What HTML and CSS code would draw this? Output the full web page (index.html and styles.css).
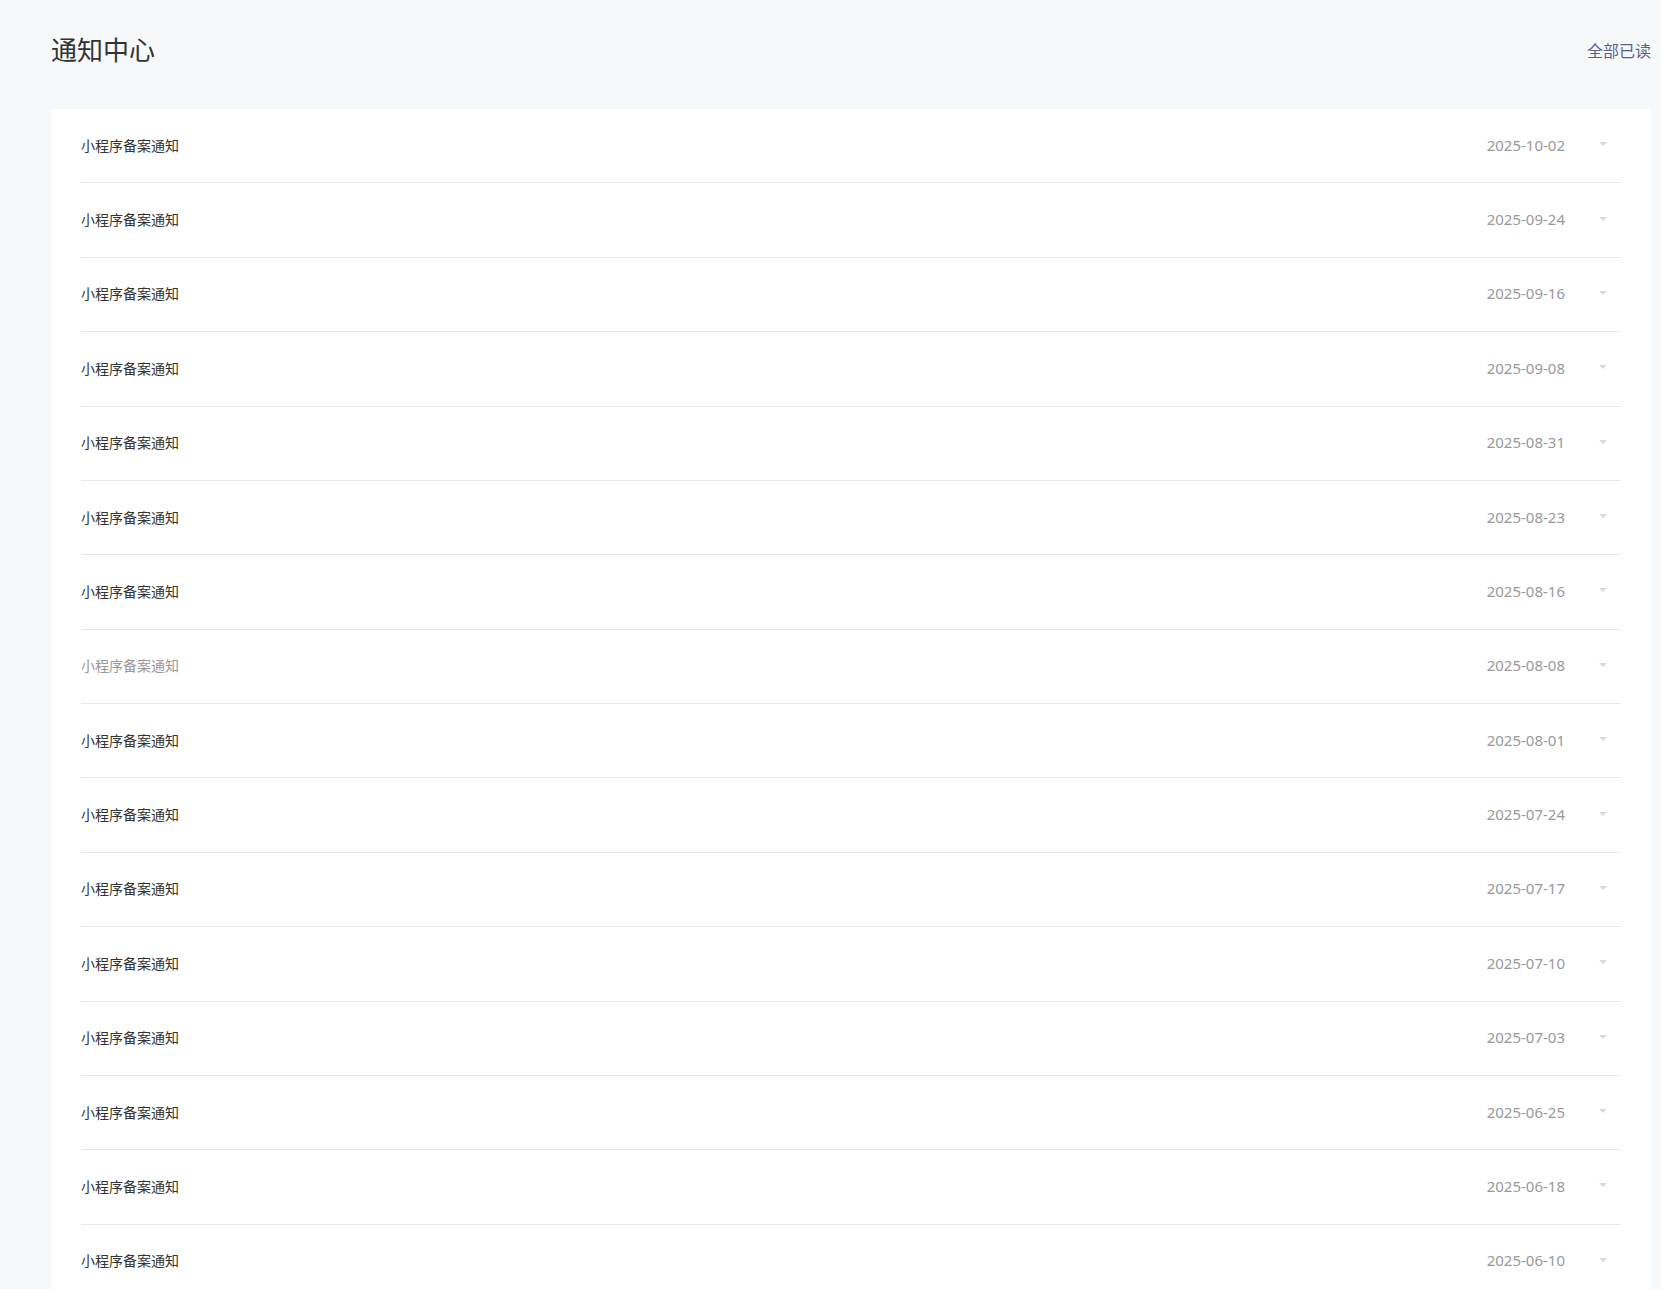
FILE: index.html
```html
<!DOCTYPE html>
<html lang="zh-CN">
<head>
<meta charset="utf-8">
<title>通知中心</title>
<link rel="stylesheet" href="styles.css">
</head>
<body>
<div class="page">
  <header class="header">
    <h1 class="title">通知中心</h1>
    <a class="read-all">全部已读</a>
  </header>
  <section class="card">
    <ul class="list">
      <li class="item"><span class="item-title">小程序备案通知</span><span class="date">2025-10-02</span><svg class="caret" width="8" height="4" viewBox="0 0 8 4"><path d="M0 0h8L4 4z"/></svg></li>
      <li class="item"><span class="item-title">小程序备案通知</span><span class="date">2025-09-24</span><svg class="caret" width="8" height="4" viewBox="0 0 8 4"><path d="M0 0h8L4 4z"/></svg></li>
      <li class="item"><span class="item-title">小程序备案通知</span><span class="date">2025-09-16</span><svg class="caret" width="8" height="4" viewBox="0 0 8 4"><path d="M0 0h8L4 4z"/></svg></li>
      <li class="item"><span class="item-title">小程序备案通知</span><span class="date">2025-09-08</span><svg class="caret" width="8" height="4" viewBox="0 0 8 4"><path d="M0 0h8L4 4z"/></svg></li>
      <li class="item"><span class="item-title">小程序备案通知</span><span class="date">2025-08-31</span><svg class="caret" width="8" height="4" viewBox="0 0 8 4"><path d="M0 0h8L4 4z"/></svg></li>
      <li class="item"><span class="item-title">小程序备案通知</span><span class="date">2025-08-23</span><svg class="caret" width="8" height="4" viewBox="0 0 8 4"><path d="M0 0h8L4 4z"/></svg></li>
      <li class="item"><span class="item-title">小程序备案通知</span><span class="date">2025-08-16</span><svg class="caret" width="8" height="4" viewBox="0 0 8 4"><path d="M0 0h8L4 4z"/></svg></li>
      <li class="item is-read"><span class="item-title">小程序备案通知</span><span class="date">2025-08-08</span><svg class="caret" width="8" height="4" viewBox="0 0 8 4"><path d="M0 0h8L4 4z"/></svg></li>
      <li class="item"><span class="item-title">小程序备案通知</span><span class="date">2025-08-01</span><svg class="caret" width="8" height="4" viewBox="0 0 8 4"><path d="M0 0h8L4 4z"/></svg></li>
      <li class="item"><span class="item-title">小程序备案通知</span><span class="date">2025-07-24</span><svg class="caret" width="8" height="4" viewBox="0 0 8 4"><path d="M0 0h8L4 4z"/></svg></li>
      <li class="item"><span class="item-title">小程序备案通知</span><span class="date">2025-07-17</span><svg class="caret" width="8" height="4" viewBox="0 0 8 4"><path d="M0 0h8L4 4z"/></svg></li>
      <li class="item"><span class="item-title">小程序备案通知</span><span class="date">2025-07-10</span><svg class="caret" width="8" height="4" viewBox="0 0 8 4"><path d="M0 0h8L4 4z"/></svg></li>
      <li class="item"><span class="item-title">小程序备案通知</span><span class="date">2025-07-03</span><svg class="caret" width="8" height="4" viewBox="0 0 8 4"><path d="M0 0h8L4 4z"/></svg></li>
      <li class="item"><span class="item-title">小程序备案通知</span><span class="date">2025-06-25</span><svg class="caret" width="8" height="4" viewBox="0 0 8 4"><path d="M0 0h8L4 4z"/></svg></li>
      <li class="item"><span class="item-title">小程序备案通知</span><span class="date">2025-06-18</span><svg class="caret" width="8" height="4" viewBox="0 0 8 4"><path d="M0 0h8L4 4z"/></svg></li>
      <li class="item"><span class="item-title">小程序备案通知</span><span class="date">2025-06-10</span><svg class="caret" width="8" height="4" viewBox="0 0 8 4"><path d="M0 0h8L4 4z"/></svg></li>
    </ul>
  </section>
</div>
</body>
</html>
```

FILE: styles.css
```css
html {
  scrollbar-width: none;
}
html::-webkit-scrollbar {
  display: none;
}
body {
  margin: 0;
  background: #f7f8fa;
  font-family: "Noto Sans", "Noto Sans CJK SC", sans-serif;
  color: #333;
}
.page {
  padding: 30px 10px 0 51px;
}
.header {
  display: flex;
  justify-content: space-between;
  align-items: center;
  height: 40px;
  margin-bottom: 39px;
}
.title {
  margin: 0;
  font-size: 26px;
  font-weight: 400;
  color: #333;
  line-height: 40px;
}
.read-all {
  font-size: 16px;
  color: #56638f;
  cursor: pointer;
}
.card {
  background: #fff;
  border-radius: 4px;
  padding: 0 30px;
}
.list {
  list-style: none;
  margin: 0;
  padding: 0;
}
.item {
  display: flex;
  align-items: center;
  height: 22px;
  padding: 25.7px 0;
  line-height: 22px;
  border-bottom: 1px solid #e8e8e8;
}
.item-title {
  flex: 1;
  font-size: 14px;
  color: #333;
}
.is-read .item-title {
  color: #999;
}
.date {
  font-size: 15px;
  line-height: 20px;
  color: #999;
  margin-bottom: 2px;
}
.caret {
  margin: 0 14px 3px 34px;
  fill: #d9d9d9;
}
```
